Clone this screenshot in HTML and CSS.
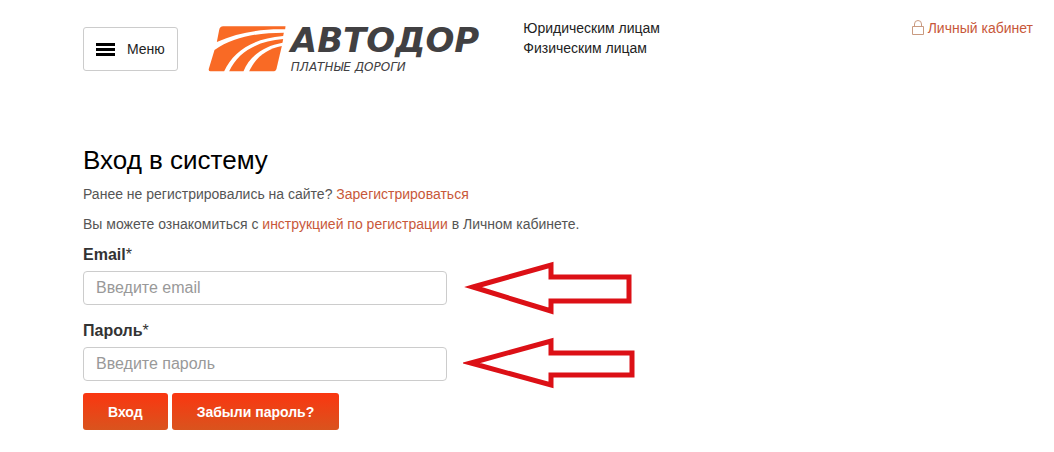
FILE: index.html
```
<!DOCTYPE html>
<html lang="ru">

<head>
  <meta charset="UTF-8">
  <meta name="viewport" content="width=device-width, initial-scale=1">
  <title>Вход в систему</title>
  <link rel="stylesheet" href="styles.css">
</head>

<body>
  <header class="header">
    <button class="menu-btn" type="button">
      <svg class="menu-btn__icon" viewBox="0 0 19 13" aria-hidden="true">
        <path d="M0 0h19v3H0zM0 5h19v3H0zM0 10h19v3H0z" />
      </svg>
      Меню
    </button>
    <a class="logo" href="#">
      <svg class="logo__mark" viewBox="0 0 231 138" aria-hidden="true">
        <path d="M44 1H231L230 10C165 8 90 18 25 48L32 12Q34 1 44 1Z" />
        <path d="M18 72C75 32 150 20 226 20L224 30C130 38 75 76 47 136H6Q-1 136 1 128Z" />
        <path d="M224 39L222 50C165 60 122 92 105 136H62C90 75 150 45 224 39Z" />
        <path d="M220 60L204 128Q202 136 193 136H122C140 95 175 68 220 60Z" />
      </svg>
      <span class="logo__text">
        <span class="logo__name">АВТОДОР</span>
        <span class="logo__sub">ПЛАТНЫЕ ДОРОГИ</span>
      </span>
    </a>
    <nav class="nav">
      <a href="#">Юридическим лицам</a>
      <a href="#">Физическим лицам</a>
    </nav>
    <a class="account" href="#">
      <svg class="account__icon" viewBox="0 0 12 15" aria-hidden="true">
        <path d="M.5 6.500h11v8H.5zM2.500 6.500V4a3.500 3.500 0 0 1 7 0v2.500" />
      </svg>
      Личный кабинет
    </a>
  </header>

  <main class="login">
    <h1 class="login__title">Вход в систему</h1>
    <p class="login__text">Ранее не регистрировались на сайте? <a href="#">Зарегистрироваться</a></p>
    <p class="login__text">Вы можете ознакомиться с <a href="#">инструкцией по регистрации</a> в Личном кабинете.</p>
    <form>
      <div class="field">
        <label class="field__label" for="email">Email<span>*</span></label>
        <div class="field__row">
          <input class="field__input" id="email" type="email" placeholder="Введите email">
          <svg class="field__arrow" viewBox="0 0 172 56" aria-hidden="true">
            <path d="M10 27L88 5V17H166V41H88V51Z" />
          </svg>
        </div>
      </div>
      <div class="field">
        <label class="field__label" for="password">Пароль<span>*</span></label>
        <div class="field__row">
          <input class="field__input" id="password" type="password" placeholder="Введите пароль">
          <svg class="field__arrow" viewBox="0 0 172 56" aria-hidden="true">
            <path d="M8 27L88 5V17H169V39H88V49Z" />
          </svg>
        </div>
      </div>
      <div class="login__buttons">
        <button class="btn" type="submit">Вход</button>
        <button class="btn" type="button">Забыли пароль?</button>
      </div>
    </form>
  </main>
</body>

</html>
```
FILE: styles.css
```
* {
  box-sizing: border-box;
}

body {
  margin: 0;
  padding: 18px 21px 18px 83px;
  font-family: "Liberation Sans", Arial, sans-serif;
  font-size: 14px;
  line-height: 20px;
  color: #555;
  background-color: white;
}

a {
  color: #c8583a;
  text-decoration: none;
}

.header {
  display: flex;
  align-items: flex-start;
}

.menu-btn {
  display: flex;
  align-items: center;
  gap: 12px;
  height: 44px;
  margin-top: 9px;
  padding: 0 12px;
  font: inherit;
  color: #222;
  background-color: white;
  border: 1px solid #ccc;
  border-radius: 3px;
}

.menu-btn__icon {
  width: 19px;
  height: 13px;
  fill: black;
}

.logo {
  display: flex;
  gap: 5px;
  margin: 8px 0 0 30px;
  color: #414042;
}

.logo__mark {
  width: 78px;
  height: 46px;
  fill: #f96a25;
}

.logo__text {
  display: flex;
  flex-direction: column;
  font-family: "DejaVu Sans", sans-serif;
  font-style: italic;
}

.logo__name {
  font-size: 34px;
  font-weight: 700;
  line-height: 28px;
}

.logo__sub {
  font-size: 12px;
  line-height: 26px;
}

.nav {
  display: flex;
  flex-direction: column;
  margin-left: 44px;
}

.nav a {
  color: #222;
}

.account {
  display: flex;
  gap: 4px;
  margin-left: auto;
}

.account__icon {
  width: 12px;
  height: 15px;
  margin-top: 2px;
  fill: none;
  stroke: #c99a80;
}

.login {
  margin-top: 66px;
}

.login__title {
  margin: 0 0 10px;
  font-size: 26px;
  font-weight: 400;
  line-height: 28px;
  color: black;
}

.login__text {
  margin: 0 0 10px;
}

.field + .field {
  margin-top: 15px;
}

.field__label {
  display: block;
  margin-bottom: 5px;
  font-size: 16px;
  font-weight: 700;
  line-height: 22px;
  color: #333;
}

.field__label span {
  font-weight: 400;
}

.field__row {
  display: flex;
  align-items: center;
  gap: 16px;
}

.field__input {
  width: 364px;
  height: 34px;
  padding: 6px 12px;
  font: inherit;
  font-size: 16px;
  color: #555;
  border: 1px solid #ccc;
  border-radius: 4px;
}

.field__input::placeholder {
  color: #999;
}

.field__arrow {
  width: 172px;
  height: 56px;
  margin: -11px 0;
  fill: white;
  stroke: #dc1016;
  stroke-width: 5;
}

.login__buttons {
  display: flex;
  gap: 4px;
  margin-top: 12px;
}

.btn {
  height: 37px;
  padding: 0 25px;
  font: inherit;
  font-weight: 700;
  color: white;
  background: linear-gradient(#fa3610, #d9541e);
  border: 0;
  border-radius: 3px;
}
```
